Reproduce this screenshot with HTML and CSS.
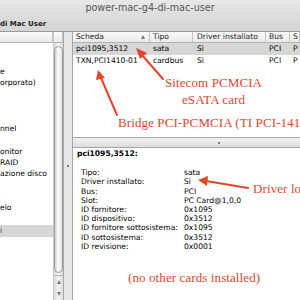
FILE: index.html
```html
<!DOCTYPE html>
<html lang="it">
<head>
    <meta charset="UTF-8">
    <title>power-mac-g4-di-mac-user</title>
    <link rel="stylesheet" href="styles.css">
</head>
<body>

    <div class="window">

        <div class="titlebar">power-mac-g4-di-mac-user</div>
        <div class="toolbar">di Mac User</div>

        <div class="main">

            <!-- source list on the left -->
            <div class="sidebar">
                <div class="source">
                    <div class="col-head"></div>
                    <ul class="source-list">
                        <li></li>
                        <li></li>
                        <li>e</li>
                        <li>orporato)</li>
                        <li></li>
                        <li></li>
                        <li></li>
                        <li>nnel</li>
                        <li></li>
                        <li>onitor</li>
                        <li>RAID</li>
                        <li>azione disco</li>
                        <li></li>
                        <li></li>
                        <li>elo</li>
                        <li></li>
                        <li class="selected">i</li>
                    </ul>
                </div>
                <div class="vscroll">
                    <div class="corner"></div>
                    <div class="track">
                        <div class="thumb"></div>
                    </div>
                    <div class="arrows">
                        <span class="arrow-up"></span>
                        <span class="arrow-down"></span>
                    </div>
                </div>
            </div>

            <div class="vsplit"><span class="dimple"></span></div>

            <!-- cards table + details -->
            <div class="content">
                <div class="cards">
                    <div class="row thead">
                        <div class="cell">Scheda <span class="sort"></span></div>
                        <div class="cell">Tipo</div>
                        <div class="cell">Driver installato</div>
                        <div class="cell">Bus</div>
                        <div class="cell">S</div>
                    </div>
                    <div class="row selected">
                        <div class="cell">pci1095,3512</div>
                        <div class="cell">sata</div>
                        <div class="cell">Sì</div>
                        <div class="cell">PCI</div>
                        <div class="cell">P</div>
                    </div>
                    <div class="row">
                        <div class="cell">TXN,PCI1410-01</div>
                        <div class="cell">cardbus</div>
                        <div class="cell">Sì</div>
                        <div class="cell">PCI</div>
                        <div class="cell">P</div>
                    </div>
                </div>

                <div class="hsplit"><span class="dimple"></span></div>

                <div class="detail">
                    <h2>pci1095,3512:</h2>
                    <dl class="props">
                        <dt>Tipo:</dt><dd>sata</dd>
                        <dt>Driver installato:</dt><dd>Sì</dd>
                        <dt>Bus:</dt><dd>PCI</dd>
                        <dt>Slot:</dt><dd>PC Card@1,0,0</dd>
                        <dt>ID fornitore:</dt><dd>0x1095</dd>
                        <dt>ID dispositivo:</dt><dd>0x3512</dd>
                        <dt>ID fornitore sottosistema:</dt><dd>0x1095</dd>
                        <dt>ID sottosistema:</dt><dd>0x3512</dd>
                        <dt>ID revisione:</dt><dd>0x0001</dd>
                    </dl>
                </div>
            </div>
        </div>

        <!-- red notes drawn over the screenshot -->
        <div class="note note-sitecom">Sitecom PCMCIA<br>eSATA card</div>
        <div class="note note-bridge">Bridge PCI-PCMCIA (TI PCI-1410)</div>
        <div class="note note-driver">Driver loaded</div>
        <div class="note note-none">(no other cards installed)</div>

        <svg class="arrows-layer" width="300" height="300" viewBox="0 0 300 300">
            <g stroke="#e2452c" stroke-width="2" stroke-linecap="round">
                <line x1="163" y1="79" x2="142" y2="55"/>
                <line x1="117" y1="115" x2="101" y2="78"/>
                <line x1="248" y1="188" x2="206" y2="181"/>
            </g>
            <g fill="#e2452c">
                <polygon points="136,48 147,53 140,59"/>
                <polygon points="98,70 105,78 96,80"/>
                <polygon points="198,180 208,176 207,186"/>
            </g>
        </svg>

    </div>

</body>
</html>
```

FILE: styles.css
```css
/* --- Base --- */
:root {
    --red: #e2452c;
    --line: #a6a6a6;
    --select: #d6d6d6;
}

body {
    margin: 0;
    padding: 0;
    font-family: 'DejaVu Sans', sans-serif;
    font-size: 7.6px;
    color: #000;
    background-color: #e6e6e6;
}

.window {
    position: relative;
    width: 300px;
    height: 300px;
    overflow: hidden;
    display: flex;
    flex-direction: column;
}

/* --- Title bar & toolbar --- */
.titlebar {
    height: 16px;
    line-height: 16px;
    text-align: center;
    font-size: 9.6px;
    color: #555;
    background: linear-gradient(#e8e8e8, #dcdcdc);
}
.toolbar {
    height: 16px;
    line-height: 16px;
    font-size: 7px;
    font-weight: 700;
    color: #222;
    background: linear-gradient(#dcdcdc, #d4d4d4);
    border-bottom: 1px solid #9a9a9a;
    box-sizing: border-box;
}

.main {
    flex: 1;
    display: flex;
    min-height: 0;
    background-color: #e8e8e8;
}

/* --- Source list --- */
.sidebar {
    width: 64px;
    display: flex;
    background-color: #fff;
    border-right: 1px solid var(--line);
    box-sizing: border-box;
}
.source { width: 54px; }
.col-head, .corner {
    height: 11px;
    background: linear-gradient(#fbfbfb, #e9e9e9);
    border-bottom: 1px solid #b4b4b4;
    border-right: 1px solid #c4c4c4;
    box-sizing: border-box;
}
.source-list {
    list-style: none;
    margin: 0;
    padding: 0;
}
.source-list li {
    height: 11.4px;
    line-height: 11.4px;
    white-space: nowrap;
    overflow: hidden;
}
.source-list li.selected {
    background-color: var(--select);
    color: #333;
}

.vscroll {
    width: 9px;
    display: flex;
    flex-direction: column;
    background: linear-gradient(90deg, #dcdcdc, #f4f4f4 50%, #dcdcdc);
    border-left: 1px solid #c8c8c8;
}
.track {
    flex: 1;
    padding-top: 3px;
    padding-bottom: 2px;
    display: flex;
}
.thumb {
    flex: 1;
    border-radius: 5px;
    border: 1px solid #9c9c9c;
    background: linear-gradient(90deg, #cfcfcf, #fdfdfd 45%, #e2e2e2);
}
.arrows {
    height: 24px;
    display: flex;
    flex-direction: column;
    align-items: center;
    justify-content: space-around;
    border-top: 1px solid #b8b8b8;
}
.arrow-up, .arrow-down {
    width: 0;
    height: 0;
    border-left: 2.5px solid transparent;
    border-right: 2.5px solid transparent;
}
.arrow-up { border-bottom: 4px solid #7a7a7a; }
.arrow-down { border-top: 4px solid #7a7a7a; }

/* --- Splitters --- */
.vsplit {
    width: 8px;
    background-color: #e6e6e6;
    display: flex;
    justify-content: center;
    padding-top: 133px;
    box-sizing: border-box;
}
.hsplit {
    height: 9px;
    background: linear-gradient(#f1f1f1, #dedede);
    border-top: 1px solid var(--line);
    border-bottom: 1px solid var(--line);
    display: flex;
    align-items: center;
    padding-left: 145px;
}
.dimple {
    width: 2px;
    height: 2px;
    border-radius: 1px;
    background-color: #555;
}

/* --- Cards table --- */
.content {
    flex: 1;
    display: flex;
    flex-direction: column;
    background-color: #fff;
    border-left: 1px solid var(--line);
}
.cards { height: 105px; }
.row {
    display: grid;
    grid-template-columns: 77px 43px 73px 24px 1fr;
    height: 11.5px;
    line-height: 11.5px;
    white-space: nowrap;
}
.row .cell {
    padding-left: 3px;
    overflow: hidden;
}
.row .cell:nth-child(3) { padding-left: 4px; }
.thead {
    height: 11px;
    line-height: 10px;
    background: linear-gradient(#fbfbfb, #e9e9e9);
    border-bottom: 1px solid #b4b4b4;
    box-sizing: border-box;
    color: #222;
}
.thead .cell {
    border-right: 1px solid #c4c4c4;
    position: relative;
}
.row.selected { background-color: var(--select); }
.sort {
    position: absolute;
    right: 4px;
    top: 3px;
    width: 0;
    height: 0;
    border-left: 2.5px solid transparent;
    border-right: 2.5px solid transparent;
    border-bottom: 4px solid #777;
}

/* --- Detail pane --- */
.detail {
    flex: 1;
    padding: 1px 0 0 4px;
    line-height: 9.2px;
}
.detail h2 {
    margin: 0 0 10px;
    font-size: 7.6px;
    font-weight: 700;
}
.props {
    display: grid;
    grid-template-columns: 103px 1fr;
    margin: 0;
    padding-left: 4px;
}
.props dt, .props dd {
    margin: 0;
    white-space: nowrap;
}

/* --- Red notes --- */
.note {
    position: absolute;
    font-family: 'Liberation Serif', serif;
    font-size: 13px;
    line-height: 17px;
    letter-spacing: 0.1px;
    color: var(--red);
    white-space: nowrap;
}
.note-sitecom { left: 165px; top: 74px; text-align: center; }
.note-bridge { left: 118px; top: 114px; }
.note-driver { left: 253px; top: 180px; }
.note-none { left: 128px; top: 269px; }

.arrows-layer {
    position: absolute;
    left: 0;
    top: 0;
    pointer-events: none;
}
```
